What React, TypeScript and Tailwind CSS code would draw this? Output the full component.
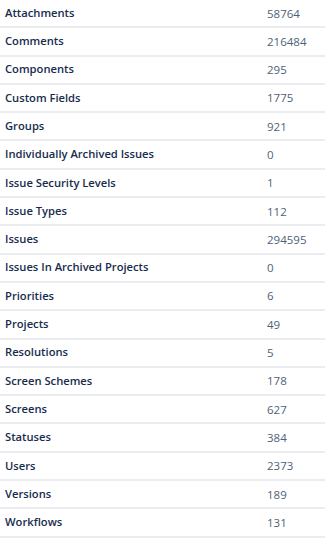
import React from "react";

const rows: [string, string][] = [
  ["Attachments", "58764"],
  ["Comments", "216484"],
  ["Components", "295"],
  ["Custom Fields", "1775"],
  ["Groups", "921"],
  ["Individually Archived Issues", "0"],
  ["Issue Security Levels", "1"],
  ["Issue Types", "112"],
  ["Issues", "294595"],
  ["Issues In Archived Projects", "0"],
  ["Priorities", "6"],
  ["Projects", "49"],
  ["Resolutions", "5"],
  ["Screen Schemes", "178"],
  ["Screens", "627"],
  ["Statuses", "384"],
  ["Users", "2373"],
  ["Versions", "189"],
  ["Workflows", "131"],
];

export default function App() {
  return (
    <div className="w-[325px] h-[539px] bg-white font-['Open_Sans',sans-serif] text-[11.5px]">
      {rows.map(([label, value]) => (
        <div
          key={label}
          className="flex items-center h-[28.3px] border-b-2 border-[#ebecf0]"
        >
          <div className="w-[262px] pl-[5px] font-semibold text-[11.2px] text-[#172b4d]">{label}</div>
          <div className="pl-[5px] text-[#505f79]">{value}</div>
        </div>
      ))}
    </div>
  );
}
